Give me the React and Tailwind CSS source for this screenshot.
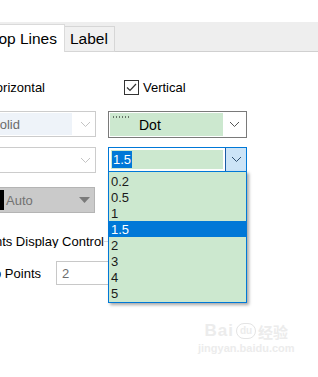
import React from "react";

function Chevron({ color = "#606060" }) {
  return (
    <svg width="11" height="7" viewBox="0 0 11 7" className="block">
      <polyline points="1,1 5.5,5.5 10,1" fill="none" stroke={color} strokeWidth="1" />
    </svg>
  );
}

const items = ["0.2", "0.5", "1", "1.5", "2", "3", "4", "5"];

export default function App() {
  return (
    <div className="relative w-[318px] h-[377px] overflow-hidden bg-white font-['Liberation_Sans',Arial,sans-serif] text-[13px] text-black leading-none">
      {/* Tab strip */}
      <div className="mt-[22px] flex h-[30px] items-end bg-[#eeeeee]">
        <div className="flex h-[28px] w-[65px] items-center justify-end overflow-hidden whitespace-nowrap border-t border-r border-[#dadada] bg-white pr-[7px] text-[15.5px]">
          Drop Lines
        </div>
        <div className="flex h-[26px] w-[50px] items-center border-r border-b border-t border-[#d6d6d6] bg-[#f0f0f0] pl-[5px] text-[15.5px]">
          Label
        </div>
        <div className="h-full flex-1 border-b border-[#d0d0d0]" />
      </div>

      {/* Checkbox row */}
      <div className="mt-[28px] flex h-[15px] items-center">
        <div className="flex w-[45px] justify-end overflow-hidden whitespace-nowrap">Horizontal</div>
        <div className="ml-[79px] flex items-center">
          <div className="flex h-[15px] w-[15px] items-center justify-center border border-[#333333] bg-white">
            <svg width="11" height="9" viewBox="0 0 11 9">
              <polyline points="1,4.5 4,7.5 10,1" fill="none" stroke="#333" strokeWidth="1.2" />
            </svg>
          </div>
          <span className="ml-[4px]">Vertical</span>
        </div>
      </div>

      {/* Row 1 */}
      <div className="mt-[16px] flex h-[27px] gap-[12px]">
        <div className="flex h-[26px] w-[96px] items-center border-y border-r border-[#cccccc]">
          <div className="flex h-[22px] w-[72px] items-center overflow-hidden bg-[#eef3f9] text-[#6b6b6b]">
            <span className="ml-[-9px] whitespace-nowrap">Solid</span>
          </div>
          <div className="ml-[8px]">
            <Chevron color="#c4c4c4" />
          </div>
        </div>
        <div className="flex h-[27px] w-[139px] items-center border border-[#7a7a7a] p-[1px]">
          <div className="relative flex h-full w-[113px] items-center bg-[#cce8cf]">
            <svg width="17" height="2" viewBox="0 0 17 2" className="absolute left-[3px] top-[3px]">
              <line x1="0" y1="1" x2="17" y2="1" stroke="#000" strokeWidth="1" strokeDasharray="1 2" />
            </svg>
            <span className="ml-[29px] text-[14px]">Dot</span>
          </div>
          <div className="flex flex-1 justify-center pl-[1px]">
            <Chevron color="#555555" />
          </div>
        </div>
      </div>

      {/* Row 2 */}
      <div className="mt-[9px] flex h-[26px] gap-[12px]">
        <div className="flex h-[26px] w-[96px] items-center justify-end border-y border-r border-[#cccccc] pr-[4px]">
          <Chevron color="#c4c4c4" />
        </div>
        <div className="relative h-[25px] w-[139px]">
          <div className="flex h-[25px] w-full border border-[#0078d7]">
            <div className="flex flex-1 items-center p-[2px]">
              <div className="flex h-full w-full items-center bg-[#cce8cf] pl-[1px]">
                <span className="bg-[#0078d7] px-[1px] py-[2px] text-white">1.5</span>
              </div>
            </div>
            <div className="flex w-[21px] items-center justify-center border-l border-[#1b5ca6] bg-[#cce4f7]">
              <Chevron color="#2f4f6f" />
            </div>
          </div>
          {/* dropdown list */}
          <div className="absolute left-0 top-[24px] z-10 w-[139px] border border-[#0078d7] bg-[#cce8cf] pt-[1px] pb-[1px] shadow-[2px_2px_3px_rgba(0,0,0,0.35)]">
            {items.map((it) => (
              <div
                key={it}
                className={
                  it === "1.5"
                    ? "flex h-[16px] items-center bg-[#0078d7] pl-[2px] text-white"
                    : "flex h-[16px] items-center pl-[2px] text-[#1a1a1a]"
                }
              >
                {it}
              </div>
            ))}
          </div>
        </div>
      </div>

      {/* Row 3 */}
      <div className="mt-[14px] flex h-[26px]">
        <div className="flex h-[26px] w-[95px] items-center border-y border-r border-[#b4b4b4] bg-[#cacaca]">
          <div className="h-[20px] w-[4px] bg-black" />
          <span className="ml-[2px] text-[#727272]">Auto</span>
          <svg width="11" height="6" viewBox="0 0 11 6" className="ml-[46px]">
            <polygon points="0,0 11,0 5.5,6" fill="#7a7a7a" />
          </svg>
        </div>
      </div>

      {/* Group label */}
      <div className="mt-[20px] flex h-[16px] items-center">
        <div className="flex w-[104px] justify-end overflow-hidden whitespace-nowrap">Points Display Control</div>
        <div className="h-px w-[6px] bg-[#d8d8d8]" />
      </div>

      {/* Points row */}
      <div className="mt-[12px] flex h-[24px] items-center">
        <div className="flex w-[41px] justify-end overflow-hidden whitespace-nowrap">Two Points</div>
        <div className="ml-[15px] flex h-[24px] w-[80px] items-center border border-[#c8c8c8] pl-[5px] text-[#6d6d6d]">
          2
        </div>
      </div>

      {/* Watermark */}
      <div className="pointer-events-none absolute left-[198px] top-[322px] flex flex-col items-center text-[#ececec]">
        <div className="flex items-end">
          <span className="text-[17px] font-bold tracking-[1px]">Bai</span>
          <span className="mx-[2px] flex h-[16px] w-[20px] items-center justify-center rounded-full border border-[#e4e4e4] text-[10px] font-bold">du</span>
          <span className="text-[15px] font-bold font-['Noto_Sans_CJK_SC',sans-serif]">经验</span>
        </div>
        <span className="mt-[4px] text-[11px] font-bold">jingyan.baidu.com</span>
      </div>
    </div>
  );
}
